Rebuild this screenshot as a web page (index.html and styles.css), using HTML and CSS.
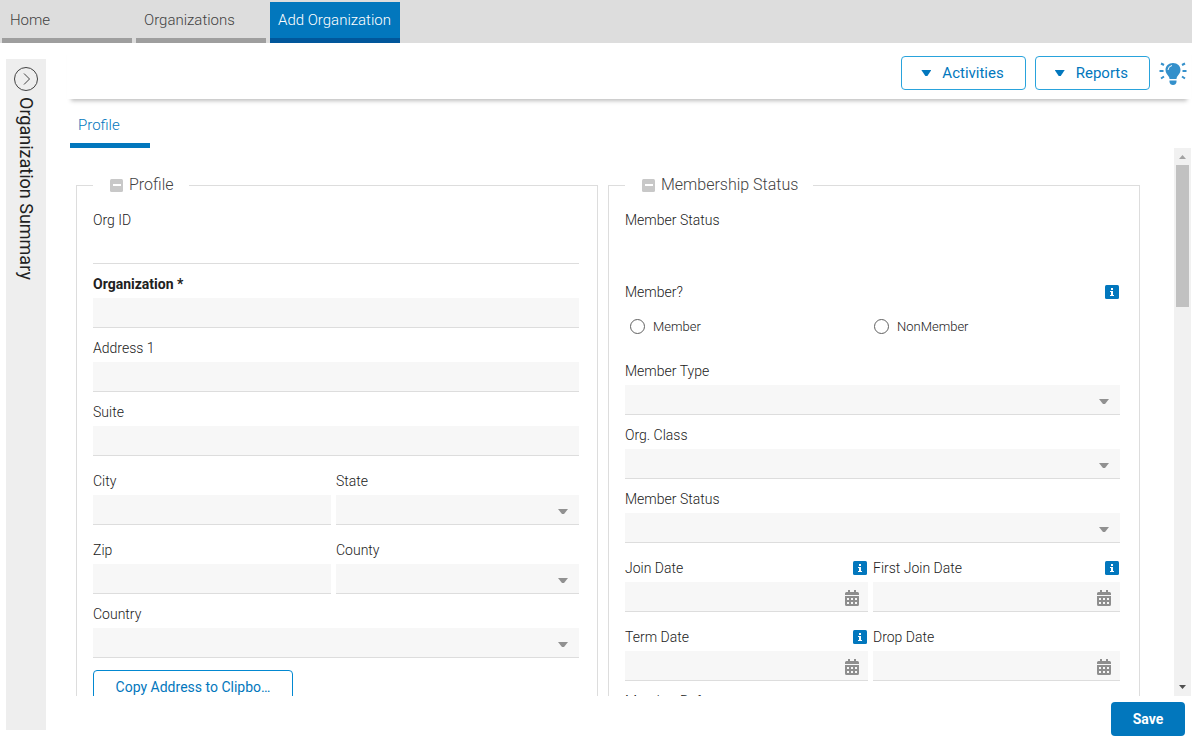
FILE: index.html
```html
<!DOCTYPE html>
<html lang="en">
<head>
  <meta charset="UTF-8" />
  <meta name="viewport" content="width=device-width, initial-scale=1.0" />
  <title>Add Organization</title>
  <link rel="stylesheet" href="styles.css">
</head>
<body>
  <svg class="sprite" aria-hidden="true">
    <symbol id="calendar" viewBox="0 0 14 16">
      <path fill-rule="evenodd" d="M0 3.500Q0 2 1.500 2H3V0H5V2H9V0H11V2H12.500Q14 2 14 3.500V5H0ZM0 6H14V14.500Q14 16 12.500 16H1.500Q0 16 0 14.500ZM2 8V10H4V8ZM6 8V10H8V8ZM10 8V10H12V8ZM2 12V14H4V12ZM6 12V14H8V12ZM10 12V14H12V12Z" />
    </symbol>
    <symbol id="info" viewBox="0 0 14 14">
      <rect width="14" height="14" rx="1.500" fill="#0277bd" />
      <path fill="#fff" d="M6 3H8V5H6ZM5 6H8V10H9V11H5V10H6V7H5Z" />
    </symbol>
    <symbol id="collapse" viewBox="0 0 13 13">
      <rect width="13" height="13" rx="1.500" fill="#c8c8c8" />
      <rect x="3" y="5" width="8" height="2" fill="#fff" />
    </symbol>
  </svg>

  <div class="app">
    <nav class="tabs">
      <a href="#">Home</a>
      <a href="#">Organizations</a>
      <a href="#" class="active">Add Organization</a>
    </nav>

    <div class="workspace">
      <aside class="summary">
        <button type="button" class="expand" aria-label="Expand summary">
          <svg viewBox="0 0 24 24"><circle cx="12" cy="12" r="11.500" /><path d="M10 6.500L15.500 12L10 17.500" /></svg>
        </button>
        <span class="summary-title">Organization Summary</span>
      </aside>

      <main>
        <div class="toolbar">
          <button type="button" class="outline-btn"><span class="caret"></span>Activities</button>
          <button type="button" class="outline-btn"><span class="caret"></span>Reports</button>
          <button type="button" class="tips" aria-label="Tips">
            <svg viewBox="0 0 28 24">
              <path class="bulb" d="M14 1C9.500 1 6.500 4 6.500 8C6.500 11 8.500 12.500 10 15Q10.500 16 10.500 17H17.500Q17.500 16 18 15C19.500 12.500 21.500 11 21.500 8C21.500 4 18.500 1 14 1Z" />
              <path class="bulb" d="M10.500 18.500H17.500V20Q17 23 14 23Q11 23 10.500 20Z" />
              <path class="shine" d="M9 8Q9.500 4 13 3.500" />
              <path class="ray" d="M2 1.500L5 3M.5 9H4.500M2 16.500L5 14.500M26 1.500L23 3M27.500 9H23.500M26 16.500L23 14.500" />
            </svg>
          </button>
        </div>

        <div class="subtabs"><a href="#">Profile</a></div>

        <form class="content" id="orgForm">
          <div class="panels">
            <fieldset>
              <legend><svg class="icon-collapse"><use href="#collapse" /></svg>Profile</legend>
              <div class="field readonly">
                <label for="orgId">Org ID</label>
                <input type="text" id="orgId" readonly />
              </div>
              <div class="field required">
                <label for="organization">Organization *</label>
                <input type="text" id="organization" />
              </div>
              <div class="field">
                <label for="address1">Address 1</label>
                <input type="text" id="address1" />
              </div>
              <div class="field">
                <label for="suite">Suite</label>
                <input type="text" id="suite" />
              </div>
              <div class="row">
                <div class="field">
                  <label for="city">City</label>
                  <input type="text" id="city" />
                </div>
                <div class="field">
                  <label for="state">State</label>
                  <div class="control"><select id="state"><option></option></select><span class="caret"></span></div>
                </div>
              </div>
              <div class="row">
                <div class="field">
                  <label for="zip">Zip</label>
                  <input type="text" id="zip" />
                </div>
                <div class="field">
                  <label for="county">County</label>
                  <div class="control"><select id="county"><option></option></select><span class="caret"></span></div>
                </div>
              </div>
              <div class="field">
                <label for="country">Country</label>
                <div class="control"><select id="country"><option></option></select><span class="caret"></span></div>
              </div>
              <button type="button" class="outline-btn copy-btn">Copy Address to Clipbo…</button>
            </fieldset>

            <fieldset class="membership">
              <legend><svg class="icon-collapse"><use href="#collapse" /></svg>Membership Status</legend>
              <div class="field status">
                <span class="label">Member Status</span>
              </div>
              <div class="field member" role="radiogroup" aria-labelledby="memberLabel">
                <span class="label" id="memberLabel">Member?<svg class="icon-info"><use href="#info" /></svg></span>
                <div class="radios">
                  <label><input type="radio" name="member" />Member</label>
                  <label><input type="radio" name="member" />NonMember</label>
                </div>
              </div>
              <div class="field">
                <label for="memberType">Member Type</label>
                <div class="control"><select id="memberType"><option></option></select><span class="caret"></span></div>
              </div>
              <div class="field">
                <label for="orgClass">Org. Class</label>
                <div class="control"><select id="orgClass"><option></option></select><span class="caret"></span></div>
              </div>
              <div class="field">
                <label for="memberStatus">Member Status</label>
                <div class="control"><select id="memberStatus"><option></option></select><span class="caret"></span></div>
              </div>
              <div class="row">
                <div class="field">
                  <label for="joinDate">Join Date<svg class="icon-info"><use href="#info" /></svg></label>
                  <div class="control"><input type="text" id="joinDate" /><svg class="icon-calendar"><use href="#calendar" /></svg></div>
                </div>
                <div class="field">
                  <label for="firstJoinDate">First Join Date<svg class="icon-info"><use href="#info" /></svg></label>
                  <div class="control"><input type="text" id="firstJoinDate" /><svg class="icon-calendar"><use href="#calendar" /></svg></div>
                </div>
              </div>
              <div class="row">
                <div class="field">
                  <label for="termDate">Term Date<svg class="icon-info"><use href="#info" /></svg></label>
                  <div class="control"><input type="text" id="termDate" /><svg class="icon-calendar"><use href="#calendar" /></svg></div>
                </div>
                <div class="field">
                  <label for="dropDate">Drop Date</label>
                  <div class="control"><input type="text" id="dropDate" /><svg class="icon-calendar"><use href="#calendar" /></svg></div>
                </div>
              </div>
              <div class="field">
                <label for="memberRef">Member Ref</label>
                <input type="text" id="memberRef" />
              </div>
            </fieldset>
          </div>
          <div class="scrollbar" aria-hidden="true">
            <span class="arrow up"></span>
            <span class="thumb"></span>
            <span class="arrow down"></span>
          </div>
        </form>

        <footer>
          <button type="submit" form="orgForm" class="save">Save</button>
        </footer>
      </main>
    </div>
  </div>
</body>
</html>
```
FILE: styles.css
```css
* {
  margin: 0;
  padding: 0;
  box-sizing: border-box;
}

body {
  font-family: Roboto, sans-serif;
  font-size: 14px;
  font-weight: 300;
  color: #212121;
  background: #fff;
}

button,
input,
select {
  font: inherit;
  color: inherit;
}

button {
  cursor: pointer;
}

a {
  text-decoration: none;
}

.sprite {
  display: none;
}

.app {
  display: flex;
  flex-direction: column;
  height: 100vh;
}

/* Top tabs */
.tabs {
  display: flex;
  gap: 4px;
  padding: 2px 2px 0;
  background: #ddd;
}

.tabs a {
  width: 130px;
  height: 41px;
  padding-left: 8px;
  border-bottom: 5px solid #9e9e9e;
  font-size: 15px;
  line-height: 36px;
  color: #424242;
  white-space: nowrap;
}

.tabs .active {
  background: #0277bd;
  border-color: #01579b;
  color: #fff;
}

.workspace {
  flex: 1;
  display: flex;
  min-height: 0;
}

/* Collapsed side panel */
.summary {
  display: flex;
  flex-direction: column;
  align-items: center;
  gap: 6px;
  width: 40px;
  margin: 16px 21px 8px 6px;
  padding-top: 8px;
  background: #eee;
}

.expand {
  width: 24px;
  height: 24px;
  border: 0;
  background: none;
}

.expand svg {
  display: block;
  fill: none;
  stroke: #424242;
}

.summary-title {
  writing-mode: vertical-rl;
  font-size: 18px;
  font-weight: 400;
}

main {
  flex: 1;
  display: flex;
  flex-direction: column;
  min-width: 0;
}

.toolbar {
  display: flex;
  justify-content: flex-end;
  gap: 9px;
  padding: 13px 4px 9px 0;
  margin-right: 1px;
  box-shadow: 0 6px 4px -4px rgba(0, 0, 0, 0.25);
}

.outline-btn {
  display: flex;
  align-items: center;
  gap: 11px;
  height: 34px;
  padding: 0 21px 0 19px;
  border: 1px solid #29a3dc;
  border-radius: 4px;
  background: #fff;
  color: #0277bd;
  font-size: 15px;
  font-weight: 400;
}

.caret {
  width: 10px;
  height: 6px;
  background: #0277bd;
  clip-path: polygon(0 0, 100% 0, 60% 100%, 40% 100%);
}

.tips {
  width: 28px;
  padding-top: 2px;
  border: 0;
  background: none;
}

.tips svg {
  display: block;
  height: 24px;
}

.bulb {
  fill: #3490cb;
}

.shine,
.ray {
  fill: none;
  stroke: #fff;
  stroke-width: 1;
}

.ray {
  stroke: #3490cb;
  stroke-width: 2;
}

.subtabs {
  display: flex;
  padding: 8px 3px 0;
}

.subtabs a {
  width: 80px;
  padding-left: 8px;
  border-bottom: 5px solid #0277bd;
  color: #0277bd;
  font-size: 15px;
  line-height: 36px;
}

/* Form */
.content {
  flex: 1;
  display: flex;
  min-height: 0;
}

.panels {
  flex: 1;
  display: grid;
  grid-template-columns: 522fr 532fr;
  align-items: start;
  gap: 10px;
  padding: 27px 34px 0 9px;
  overflow: hidden;
}

fieldset {
  min-width: 0;
  padding: 0 18px 24px 16px;
  border: 1px solid #ddd;
}

.membership {
  padding-right: 19px;
}

legend {
  display: flex;
  align-items: center;
  gap: 6px;
  padding: 0 15px 0 17px;
  font-size: 16px;
  line-height: 20px;
  color: #424242;
}

.icon-collapse {
  width: 13px;
  height: 13px;
}

.field {
  padding-top: 10px;
}

.field > label,
.label {
  display: flex;
  align-items: center;
  justify-content: space-between;
  height: 20px;
  margin-bottom: 4px;
  line-height: 18px;
}

.field input[type="text"],
select {
  display: block;
  width: 100%;
  height: 30px;
  padding: 0 8px;
  border: 0;
  border-bottom: 1px solid #ddd;
  border-radius: 0;
  background: #f7f7f7;
  appearance: none;
}

.field.readonly,
.field.status {
  padding-top: 15px;
}

.field.readonly input {
  background: #fff;
}

.required label {
  font-weight: 700;
}

.status {
  height: 77px;
}

.row {
  display: grid;
  grid-template-columns: 238fr 243fr;
  gap: 5px;
  padding-top: 5px;
}

.membership .row {
  grid-template-columns: 243fr 247fr;
}

.icon-info {
  width: 14px;
  height: 14px;
  margin-right: 1px;
}

.control {
  position: relative;
}

.control .caret {
  position: absolute;
  top: 14px;
  right: 11px;
  height: 5px;
  background: #919191;
  pointer-events: none;
}

.icon-calendar {
  position: absolute;
  top: 8px;
  right: 9px;
  width: 14px;
  height: 16px;
  fill: #8e8e8e;
}

.radios {
  display: grid;
  grid-template-columns: 244fr 251fr;
  margin-bottom: 15px;
}

.radios label {
  display: flex;
  align-items: center;
  gap: 8px;
  height: 20px;
  padding-left: 5px;
  font-size: 13px;
}

.radios input {
  width: 15px;
  height: 15px;
  border: 1px solid #616161;
  border-radius: 50%;
  appearance: none;
}

.member .label {
  margin-bottom: 14px;
}

.copy-btn {
  justify-content: center;
  width: 200px;
  margin-top: 12px;
  padding: 0;
  border-color: #0288d1;
  font-size: 14px;
}

.scrollbar {
  display: flex;
  flex-direction: column;
  align-items: center;
  width: 17px;
  margin-right: 1px;
  padding: 7px 0;
  background: #f1f1f1;
}

.arrow {
  width: 7px;
  height: 4px;
  background: #a3a3a3;
  clip-path: polygon(50% 0, 100% 100%, 0 100%);
}

.arrow.down {
  margin-top: auto;
  background: #505050;
  clip-path: polygon(0 0, 100% 0, 50% 100%);
}

.thumb {
  width: 13px;
  height: 142px;
  margin-top: 6px;
  background: #c1c1c1;
}

footer {
  display: flex;
  justify-content: flex-end;
  padding: 6px 7px 2px;
}

.save {
  width: 74px;
  height: 34px;
  border: 0;
  border-radius: 4px;
  background: #0277bd;
  color: #fff;
  font-weight: 700;
}
```
